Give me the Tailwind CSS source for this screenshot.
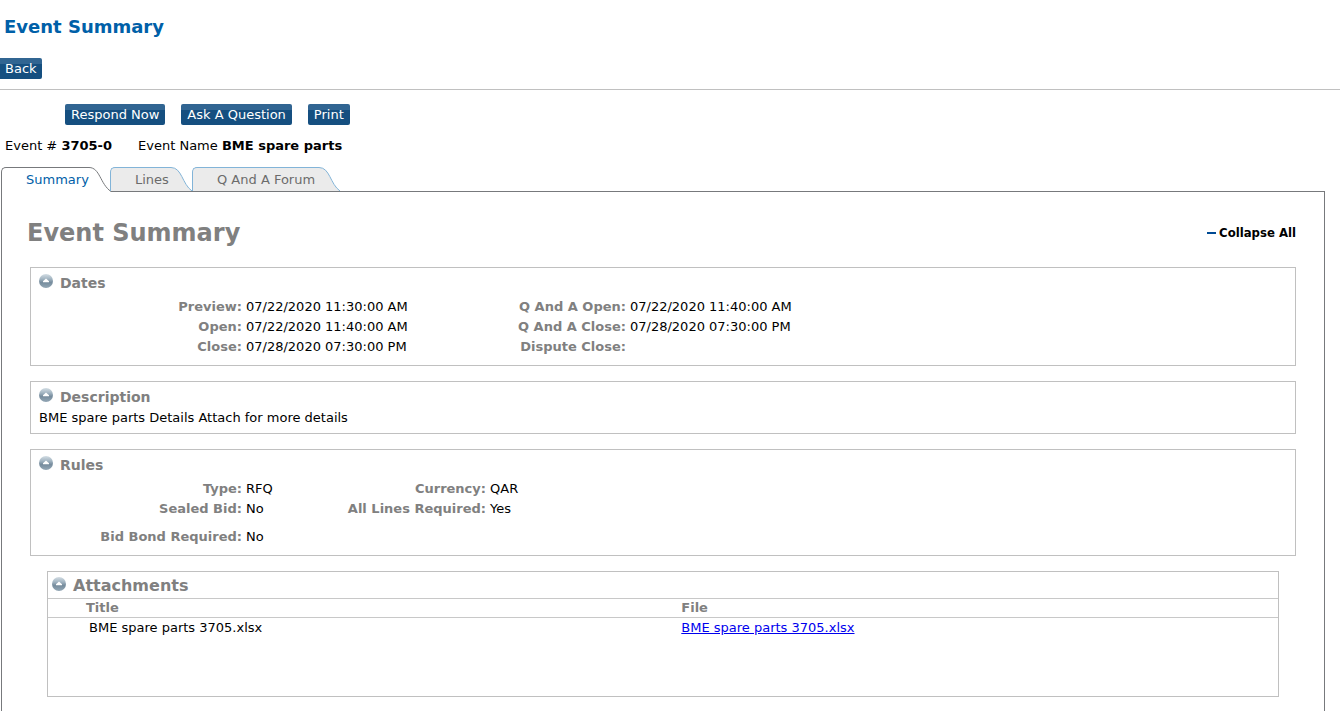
<!DOCTYPE html>
<html lang="en">
<head>
  <meta charset="UTF-8" />
  <meta name="viewport" content="width=device-width, initial-scale=1" />
  <title>Event Summary</title>
  <script src="https://cdn.jsdelivr.net/npm/@tailwindcss/browser@4"></script>
</head>
<body class="min-h-screen flex flex-col bg-white text-black text-[13px] leading-5 font-['Verdana','DejaVu_Sans',sans-serif]">
  <!-- shared icon for the section headings -->
  <svg class="absolute w-0 h-0" aria-hidden="true">
    <defs>
      <linearGradient id="ball" x1="0" y1="0" x2="0" y2="1">
        <stop offset="0" stop-color="#d3dde4" />
        <stop offset="0.35" stop-color="#a3b5c2" />
        <stop offset="0.6" stop-color="#768c9d" />
        <stop offset="1" stop-color="#93a7b5" />
      </linearGradient>
      <symbol id="collapse" viewBox="0 0 14 14">
        <circle cx="7" cy="7" r="7" fill="url(#ball)" />
        <path d="M7 4.5 10 7.3V8.3H4V7.3Z" fill="#fff" />
      </symbol>
    </defs>
  </svg>

  <header class="border-b border-[#c0c0c0] pt-4 pb-[10px]">
    <h1 class="pl-1 mb-[20px] text-[18px] leading-[22px] font-bold text-[#0060a8]">Event Summary</h1>
    <button type="button" class="block h-[21px] px-[5px] pt-px rounded-r-xs text-white leading-5 bg-linear-to-b from-[#316592] from-[6px] to-[#154f80] to-[6px]">Back</button>
  </header>

  <div class="flex gap-4 pl-[65px] pt-[14px]">
    <button type="button" class="h-[21px] px-[6px] pt-px rounded-xs text-white leading-5 bg-linear-to-b from-[#316592] from-[6px] to-[#154f80] to-[6px]">Respond Now</button>
    <button type="button" class="h-[21px] px-[6px] pt-px rounded-xs text-white leading-5 bg-linear-to-b from-[#316592] from-[6px] to-[#154f80] to-[6px]">Ask A Question</button>
    <button type="button" class="h-[21px] px-[6px] pt-px rounded-xs text-white leading-5 bg-linear-to-b from-[#316592] from-[6px] to-[#154f80] to-[6px]">Print</button>
  </div>

  <div class="flex gap-[26px] pl-[5px] pt-[11px]">
    <p>Event # <b>3705-0</b></p>
    <p>Event Name <b>BME spare parts</b></p>
  </div>

  <nav class="flex items-start pl-px mt-[11px] -mb-px z-10">
    <a href="#summary" class="flex h-[25px] text-[#0060a8]">
      <span class="w-[88px] pl-6 pt-[2px] bg-white border-t border-l border-[#77797c] rounded-tl-[5px]">Summary</span>
      <svg class="w-[22px] h-[25px]" viewBox="0 0 22 25" fill="none">
        <path d="M0 .5C11 .5 11 17 22 24.5V25H0Z" fill="#fff" />
        <path d="M0 .5C11 .5 11 17 22 24.5" stroke="#77797c" />
      </svg>
    </a>
    <a href="#lines" class="flex h-6 -ml-px text-[#6b6b6b]">
      <span class="w-[61px] pl-6 pt-[2px] bg-[#ebebeb] border-t border-l border-[#82b4d8] rounded-tl-[5px]">Lines</span>
      <svg class="w-[21px] h-6" viewBox="0 0 21 24" fill="none">
        <path d="M0 .5C11 .5 11 17 21 24H0Z" fill="#ebebeb" />
        <path d="M0 .5C11 .5 11 17 21 24" stroke="#82b4d8" />
      </svg>
    </a>
    <a href="#forum" class="flex h-6 text-[#6b6b6b]">
      <span class="w-[127px] pl-6 pt-[2px] bg-[#ebebeb] border-t border-l border-[#82b4d8] rounded-tl-[5px]">Q And A Forum</span>
      <svg class="w-[21px] h-6" viewBox="0 0 21 24" fill="none">
        <path d="M0 .5C11 .5 11 17 21 24H0Z" fill="#ebebeb" />
        <path d="M0 .5C11 .5 11 17 21 24" stroke="#82b4d8" />
      </svg>
    </a>
  </nav>

  <main id="summary" class="flex-1 ml-px mr-[15px] px-7 pt-[25px] pb-[14px] border-t border-x border-[#77797c]">
    <div class="flex items-center justify-between mb-[18px] -ml-[3px]">
      <h2 class="text-[24px] leading-8 font-bold text-[#808080]">Event Summary</h2>
      <button type="button" class="flex items-center gap-[3px] font-bold font-['Tahoma','DejaVu_Sans_Condensed',sans-serif]">
        <span class="w-[9px] h-[2px] bg-[#004a94]"></span>Collapse All
      </button>
    </div>

    <section class="border border-[#c0c0c0] px-2 pt-[5px] pb-2 mb-[15px]">
      <h3 class="flex gap-[7px] text-[14px] font-bold text-[#808080]">
        <svg class="w-[14px] h-[14px] mt-px"><use href="#collapse" /></svg>Dates
      </h3>
      <dl class="grid grid-cols-[203px_264px_112px_1fr] gap-x-1 mt-1">
        <dt class="text-right font-bold text-[#808080]">Preview:</dt><dd>07/22/2020 11:30:00 AM</dd>
        <dt class="text-right font-bold text-[#808080]">Q And A Open:</dt><dd>07/22/2020 11:40:00 AM</dd>
        <dt class="text-right font-bold text-[#808080]">Open:</dt><dd>07/22/2020 11:40:00 AM</dd>
        <dt class="text-right font-bold text-[#808080]">Q And A Close:</dt><dd>07/28/2020 07:30:00 PM</dd>
        <dt class="text-right font-bold text-[#808080]">Close:</dt><dd>07/28/2020 07:30:00 PM</dd>
        <dt class="text-right font-bold text-[#808080]">Dispute Close:</dt><dd></dd>
      </dl>
    </section>

    <section class="border border-[#c0c0c0] px-2 py-[5px] mb-[15px]">
      <h3 class="flex gap-[7px] text-[14px] font-bold text-[#808080]">
        <svg class="w-[14px] h-[14px] mt-px"><use href="#collapse" /></svg>Description
      </h3>
      <p class="mt-px">BME spare parts Details Attach for more details</p>
    </section>

    <section class="border border-[#c0c0c0] px-2 pt-[5px] pb-2 mb-[15px]">
      <h3 class="flex gap-[7px] text-[14px] font-bold text-[#808080]">
        <svg class="w-[14px] h-[14px] mt-px"><use href="#collapse" /></svg>Rules
      </h3>
      <dl class="grid grid-cols-[203px_92px_144px_1fr] gap-x-1 mt-1">
        <dt class="text-right font-bold text-[#808080]">Type:</dt><dd>RFQ</dd>
        <dt class="text-right font-bold text-[#808080]">Currency:</dt><dd>QAR</dd>
        <dt class="text-right font-bold text-[#808080]">Sealed Bid:</dt><dd>No</dd>
        <dt class="text-right font-bold text-[#808080]">All Lines Required:</dt><dd>Yes</dd>
        <dt class="mt-2 text-right font-bold text-[#808080]">Bid Bond Required:</dt><dd class="mt-2">No</dd>
      </dl>
    </section>

    <section class="border border-[#c0c0c0] min-h-[126px] mx-[17px]">
      <h3 class="flex gap-[7px] h-[26px] pl-1 pt-1 text-[16px] font-bold text-[#808080]">
        <svg class="w-[14px] h-[14px] mt-px"><use href="#collapse" /></svg>Attachments
      </h3>
      <table class="w-full text-left">
        <thead>
          <tr class="border-y border-[#c8c8c8] text-[#808080] leading-[18px]">
            <th class="w-[51%] pl-[38px]">Title</th>
            <th class="pl-[6px]">File</th>
          </tr>
        </thead>
        <tbody>
          <tr>
            <td class="pl-[41px]">BME spare parts 3705.xlsx</td>
            <td class="pl-[6px]"><a href="#file" class="text-[#0000ee] underline">BME spare parts 3705.xlsx</a></td>
          </tr>
        </tbody>
      </table>
    </section>
  </main>
</body>
</html>
